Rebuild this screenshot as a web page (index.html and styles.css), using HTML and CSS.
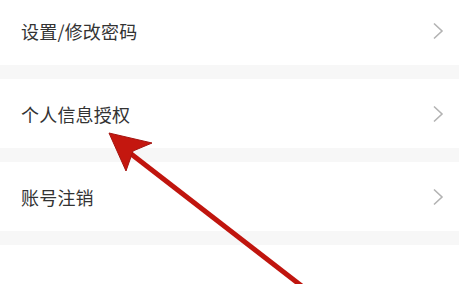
FILE: index.html
```html
<!DOCTYPE html>
<html lang="zh-CN">
<head>
<meta charset="utf-8">
<link rel="stylesheet" href="styles.css">
</head>
<body>
<div class="list">
  <div class="row"><span class="label">设置/修改密码</span><svg class="chev" width="12" height="18" viewBox="0 0 12 18"><path d="M2 1.5 L10 9 L2 16.5" fill="none" stroke="#b3b3b3" stroke-width="1.6"/></svg></div>
  <div class="gap"></div>
  <div class="row"><span class="label">个人信息授权</span><svg class="chev" width="12" height="18" viewBox="0 0 12 18"><path d="M2 1.5 L10 9 L2 16.5" fill="none" stroke="#b3b3b3" stroke-width="1.6"/></svg></div>
  <div class="gap"></div>
  <div class="row"><span class="label">账号注销</span><svg class="chev" width="12" height="18" viewBox="0 0 12 18"><path d="M2 1.5 L10 9 L2 16.5" fill="none" stroke="#b3b3b3" stroke-width="1.6"/></svg></div>
  <div class="gap"></div>
</div>
<svg class="arrow" width="459" height="284" viewBox="0 0 459 284">
  <line x1="126" y1="150" x2="312" y2="294" stroke="#c0150e" stroke-width="5" stroke-linecap="butt"/>
  <polygon points="109,133 152,143 133,151 126,171" fill="#c4170f" stroke="#a51410" stroke-width="1" stroke-linejoin="miter"/>
</svg>
</body>
</html>
```

FILE: styles.css
```css
html, body {
  margin: 0;
  padding: 0;
  background: #ffffff;
  width: 459px;
  height: 284px;
  overflow: hidden;
  font-family: "Noto Sans CJK SC", "Noto Sans", sans-serif;
}
.list {
  display: flex;
  flex-direction: column;
  margin-top: -4px;
}
.row {
  height: 69px;
  display: flex;
  align-items: center;
  justify-content: space-between;
  padding: 0 15px 0 21px;
  background: #ffffff;
}
.label {
  font-size: 18px;
  color: #333333;
  letter-spacing: 0.2px;
}
.chev {
  display: block;
}
.gap {
  height: 14px;
  background: #f7f7f7;
}
.arrow {
  position: absolute;
  left: 0;
  top: 0;
}
```
